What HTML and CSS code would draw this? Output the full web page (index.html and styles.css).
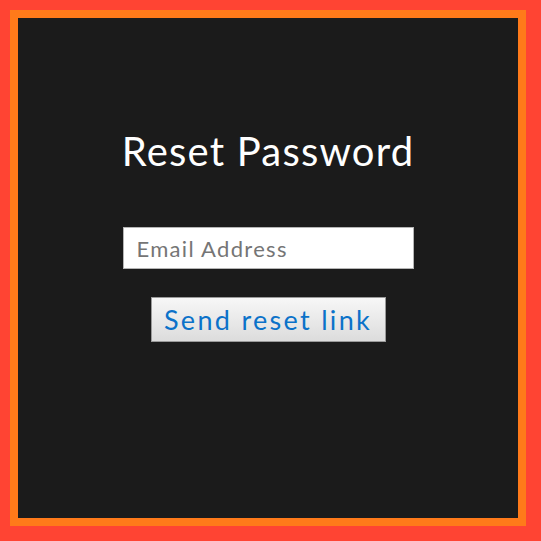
FILE: index.html
```html
<!DOCTYPE html>
<html>
<head>
<meta charset="utf-8">
<link rel="stylesheet" href="styles.css">
</head>
<body>
<div class="frame">
  <form class="reset">
    <h1 class="title">Reset Password</h1>
    <input class="email" type="text" placeholder="Email Address">
    <button class="send" type="button">Send reset link</button>
  </form>
</div>
</body>
</html>
```
FILE: styles.css
```css
html, body {
  margin: 0;
  padding: 0;
  background: #ff4433;
}
body {
  padding: 10px;
  font-family: Lato, "Liberation Sans", sans-serif;
}
.frame {
  width: 500px;
  height: 500px;
  border: 8px solid #ff7a1a;
  background: #1b1b1b;
}
.reset {
  display: flex;
  flex-direction: column;
  align-items: center;
  padding-top: 110px;
}
.title {
  margin: 0;
  color: #ffffff;
  font-weight: 400;
  font-size: 40px;
  line-height: 46px;
  letter-spacing: 1.2px;
}
.email {
  margin-top: 53px;
  width: 291px;
  height: 42px;
  box-sizing: border-box;
  border: 1px solid #b5b5b5;
  background: #fff;
  padding: 0 13px;
  font-family: Lato, "Liberation Sans", sans-serif;
  font-size: 22px;
  letter-spacing: 1.3px;
  color: #333;
}
.email::placeholder {
  color: #757575;
}
.send {
  margin-top: 28px;
  width: 235px;
  height: 45px;
  box-sizing: border-box;
  border: 1px solid #9a9a9a;
  background: linear-gradient(#f7f7f7, #dcdcdc);
  color: #0b72c9;
  font-family: Lato, "Liberation Sans", sans-serif;
  font-size: 27px;
  letter-spacing: 2.3px;
  padding: 0;
}
```
